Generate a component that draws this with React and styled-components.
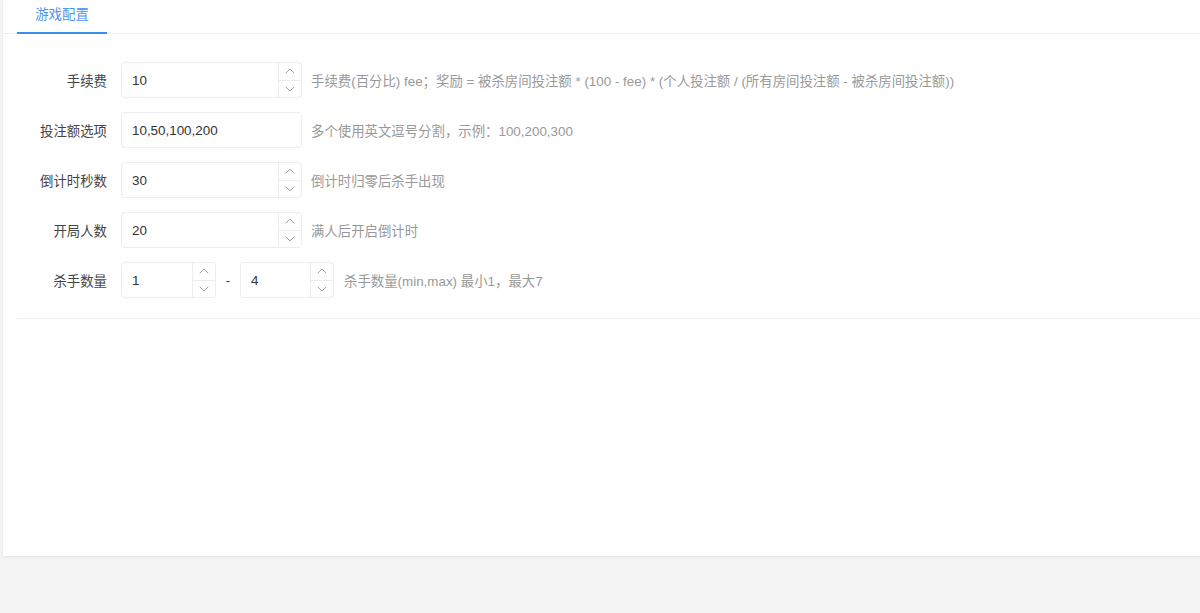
import React from 'react';
import styled, { createGlobalStyle } from 'styled-components';
import { ChevronUp, ChevronDown } from 'lucide-react';

const GlobalStyle = createGlobalStyle`
    html, body {
        margin: 0;
        padding: 0;
        background: #f4f4f4;
        font-family: "Liberation Sans", "Noto Sans CJK SC", sans-serif;
        font-size: 13.4px;
    }
    * {
        box-sizing: border-box;
    }
`;

const fields = [
    { label: '手续费', value: '10', number: true, hint: '手续费(百分比) fee；奖励 = 被杀房间投注额 * (100 - fee) * (个人投注额 / (所有房间投注额 - 被杀房间投注额))' },
    { label: '投注额选项', value: '10,50,100,200', hint: '多个使用英文逗号分割，示例：100,200,300' },
    { label: '倒计时秒数', value: '30', number: true, hint: '倒计时归零后杀手出现' },
    { label: '开局人数', value: '20', number: true, hint: '满人后开启倒计时' },
];

const NumberInput = ({ value, width }) => (
    <InputBox width={width}>
        <InputText defaultValue={value} />
        <Spinner>
            <SpinButton><ChevronUp size={16} strokeWidth={1.2} /></SpinButton>
            <SpinButton $bottom><ChevronDown size={16} strokeWidth={1.2} /></SpinButton>
        </Spinner>
    </InputBox>
);

export default function App() {
    return (
        <Page>
            <GlobalStyle />
            <Panel>
                <TabBar>
                    <Tab $active>游戏配置</Tab>
                </TabBar>
                <Form>
                    {fields.map((f) => (
                        <Row key={f.label}>
                            <Label>{f.label}</Label>
                            {f.number ? (
                                <NumberInput value={f.value} width={181} />
                            ) : (
                                <InputBox width={181}>
                                    <InputText defaultValue={f.value} />
                                </InputBox>
                            )}
                            <Hint>{f.hint}</Hint>
                        </Row>
                    ))}
                    <Row>
                        <Label>杀手数量</Label>
                        <NumberInput value="1" width={95} />
                        <Dash>-</Dash>
                        <NumberInput value="4" width={94} />
                        <Hint $gap={10}>杀手数量(min,max) 最小1，最大7</Hint>
                    </Row>
                </Form>
            </Panel>
        </Page>
    );
}

const Page = styled.div`
    min-height: 613px;
    padding-left: 3px;
    background: #f4f4f4;
`;

const Panel = styled.div`
    height: 556px;
    background: #fff;
    box-shadow: 0 1px 2px rgba(0, 0, 0, 0.08);
`;

const TabBar = styled.div`
    display: flex;
    height: 34px;
    padding-left: 14px;
    border-bottom: 1px solid #f0f0f0;
`;

const Tab = styled.div`
    width: 90px;
    height: 34px;
    line-height: 29px;
    text-align: center;
    color: ${(p) => (p.$active ? '#4d94f2' : '#555')};
    border-bottom: 2px solid ${(p) => (p.$active ? '#3a8ef0' : 'transparent')};
`;

const Form = styled.div`
    margin-left: 14px;
    padding: 28px 0 6px;
    border-bottom: 1px solid #f0f0f0;
`;

const Row = styled.div`
    display: flex;
    align-items: center;
    height: 36px;
    margin-bottom: 14px;
`;

const Label = styled.div`
    width: 104px;
    padding-right: 14px;
    text-align: right;
    color: #444;
    white-space: nowrap;
`;

const InputBox = styled.div`
    display: flex;
    width: ${(p) => p.width}px;
    height: 36px;
    border: 1px solid #ededed;
    border-radius: 4px;
    background: #fff;
    overflow: hidden;
`;

const InputText = styled.input`
    flex: 1;
    min-width: 0;
    border: none;
    outline: none;
    padding: 0 10px;
    font: inherit;
    color: #333;
    background: transparent;
`;

const Spinner = styled.div`
    display: flex;
    flex-direction: column;
    width: 23px;
    border-left: 1px solid #ededed;
`;

const SpinButton = styled.div`
    flex: 1;
    display: flex;
    align-items: center;
    justify-content: center;
    color: #8a8a8a;
    border-top: ${(p) => (p.$bottom ? '1px solid #ededed' : 'none')};
`;

const Dash = styled.div`
    width: 24px;
    text-align: center;
    color: #444;
`;

const Hint = styled.div`
    margin-left: ${(p) => p.$gap || 9}px;
    color: #999;
    white-space: nowrap;
`;
